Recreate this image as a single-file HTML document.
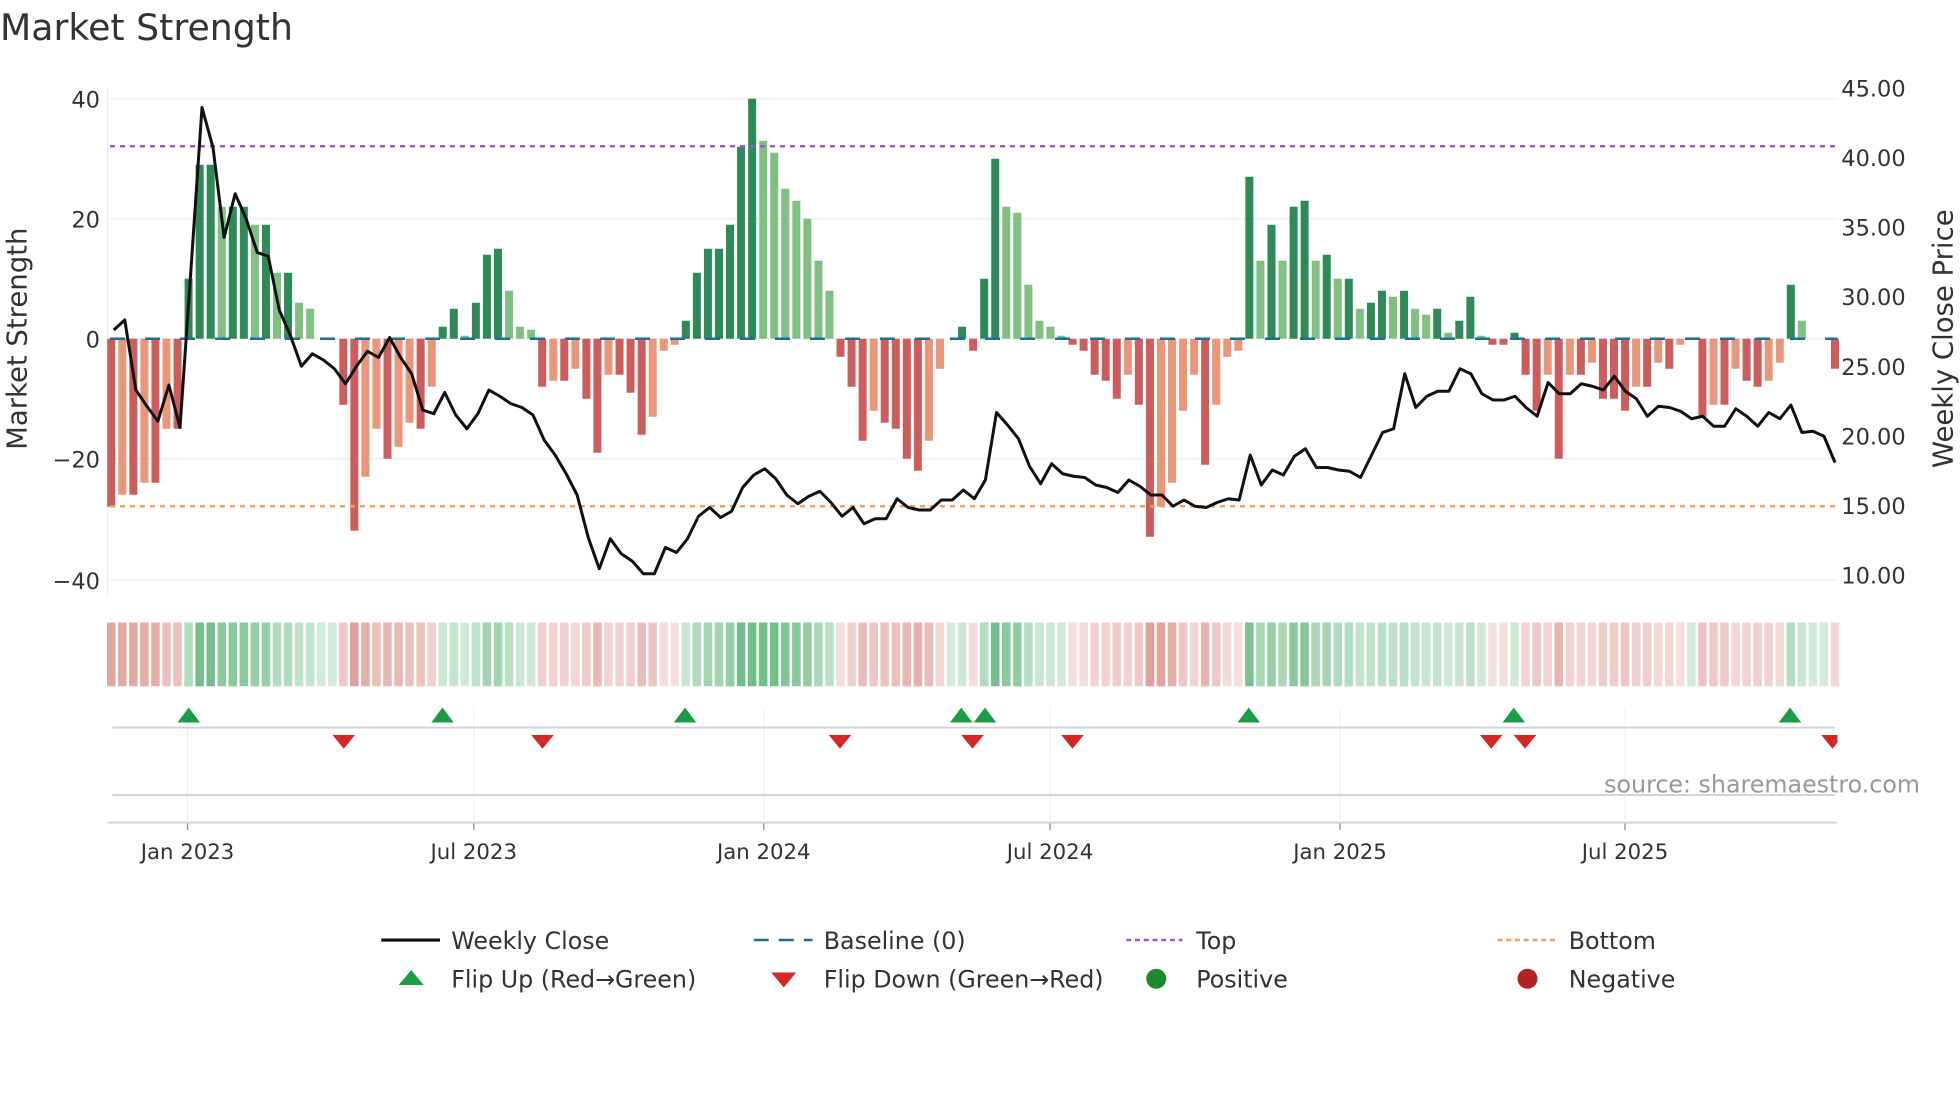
<!DOCTYPE html>
<html><head><meta charset="utf-8"><style>
html,body{margin:0;padding:0;background:#fff;overflow:hidden}
svg{display:block;font-family:"DejaVu Sans","Liberation Sans",sans-serif}
</style></head><body>
<svg id="s" width="1960" height="1102" viewBox="0 0 1568 881.6" xmlns="http://www.w3.org/2000/svg">
<text x="0" y="32" font-size="29" fill="#333">Market Strength</text>
<g id="g"></g>
</svg>
<script>
var NS="http://www.w3.org/2000/svg",g=document.getElementById('g');
function el(t,a,txt){var e=document.createElementNS(NS,t);for(var k in a)e.setAttribute(k,a[k]);if(txt!=null)e.textContent=txt;g.appendChild(e);return e;}
[79,175,271,367,464].forEach(function(y){el('line',{x1:86,x2:1470,y1:y,y2:y,stroke:'#eceff2','stroke-width':1});});
var lt=[['40',79],['20',175],['0',271],['\u221220',367],['\u221240',464]];
lt.forEach(function(a){el('text',{x:80,y:a[1]+7,'font-size':18,fill:'#333','text-anchor':'end'},a[0]);});
var rt=['45.00','40.00','35.00','30.00','25.00','20.00','15.00','10.00'];
rt.forEach(function(t,i){el('text',{x:1473,y:70+i*55.7+7,'font-size':18,fill:'#333'},t);});
el('text',{x:0,y:0,'font-size':22,fill:'#333','text-anchor':'middle',transform:'translate(21,271) rotate(-90)'},'Market Strength');
el('text',{x:0,y:0,'font-size':22,fill:'#333','text-anchor':'middle',transform:'translate(1562,271) rotate(-90)'},'Weekly Close Price');
el('line',{x1:86,x2:86,y1:70,y2:478,stroke:'#eceff2'});
var V=[-28,-26,-26,-24,-24,-15,-15,10,29,29,22,22,22,19,19,11,11,6,5,0,0,-11,-32,-23,-15,-20,-18,-14,-15,-8,2,5,0.5,6,14,15,8,2,1.5,-8,-7,-7,-5,-10,-19,-6,-6,-9,-16,-13,-2,-1,3,11,15,15,19,32,40,33,31,25,23,20,13,8,-3,-8,-17,-12,-14,-15,-20,-22,-17,-5,0,2,-2,10,30,22,21,9,3,2,0.5,-1,-2,-6,-7,-10,-6,-11,-33,-28,-24,-12,-6,-21,-11,-3,-2,27,13,19,13,22,23,13,14,10,10,5,6,8,7,8,5,4,5,1,3,7,0.5,-1,-1,1,-6,-12,-6,-20,-6,-6,-4,-10,-10,-12,-8,-8,-4,-5,-1,0,-13,-11,-11,-5,-7,-8,-7,-4,9,3,0,0,-5];
var n=V.length,dx=(1468-89)/(n-1);
for(var i=0;i<n;i++){var v=V[i],x=89+i*dx,p=i?V[i-1]:0,dark=Math.abs(v)>=Math.abs(p)&&Math.sign(v)==Math.sign(p)||Math.sign(v)!=Math.sign(p);
 var c=v>=0?(dark?'#2e8b57':'#80c080'):(dark?'#cd5c5c':'#e9967a');
 var h=Math.abs(v)*4.8;if(h<0.5)h=0;
 el('rect',{x:x-3.2,y:v>=0?271-h:271,width:6.4,height:h,fill:c});
 var a=0.25+0.55*Math.min(Math.abs(v),30)/30;
 el('rect',{x:x-3.4,y:498,width:6.8,height:51,fill:v>=0?'#2ea04f':'#c0392b','fill-opacity':a*(v>=0?0.85:0.6)});
}
el('line',{x1:88,x2:1470,y1:271,y2:271,stroke:'#1f6f8b','stroke-width':2,'stroke-dasharray':'12,16'});
el('line',{x1:88,x2:1470,y1:117,y2:117,stroke:'#9b59d0','stroke-width':2,'stroke-dasharray':'4,4'});
el('line',{x1:88,x2:1470,y1:405,y2:405,stroke:'#f0a060','stroke-width':2,'stroke-dasharray':'4,4'});
var P=[264,256,312,325,337,308,342,215,86,118,190,155,175,202,205,248,268,293,283,288,295,307,293,281,286,270,286,299,328,331,314,332,343,331,312,317,323,326,332,352,364,379,396,430,455,431,443,449,459,459,438,442,431,413,406,414,409,390,380,375,383,396,403,397,393,402,413,406,419,415,415,399,406,408,408,400,400,392,399,384,330,340,351,373,387,371,379,381,382,388,390,394,384,389,396,396,405,400,405,406,402,399,400,364,388,376,380,365,359,374,374,376,377,382,364,346,343,299,326,317,313,313,295,299,315,320,320,317,326,333,306,315,315,307,309,312,301,313,319,333,325,326,329,335,333,341,341,327,333,341,330,335,324,346,345,349,370];
var pd='';for(var i=0;i<P.length;i++){var x=91+i*(1468-91)/(P.length-1);pd+=(i?'L':'M')+x.toFixed(1)+','+P[i];}
el('path',{d:pd,fill:'none',stroke:'#111','stroke-width':2.4,'stroke-linejoin':'round'});
[150,379,611,840,1072,1300].forEach(function(x){el('line',{x1:x,x2:x,y1:565,y2:656,stroke:'#eef1f4'});el('line',{x1:x,x2:x,y1:658,y2:664,stroke:'#888'});});
el('line',{x1:90,x2:1468,y1:582,y2:582,stroke:'#cfd3d8','stroke-width':1.5});
el('line',{x1:90,x2:1468,y1:636,y2:636,stroke:'#cfd3d8','stroke-width':1.5});
el('line',{x1:86,x2:1470,y1:658,y2:658,stroke:'#cfd3d8','stroke-width':1.5});
[151,354,548,769,788,999,1211,1432].forEach(function(x){el('path',{d:'M'+(x-9)+',578L'+(x+9)+',578L'+x+',566Z',fill:'#1a9e45'});});
[275,434,672,778,858,1193,1220,1466].forEach(function(x){el('path',{d:'M'+(x-9)+',588L'+(x+9)+',588L'+x+',599Z',fill:'#d62728'});});
el('rect',{x:1470,y:585,width:20,height:20,fill:'#fff'});
el('text',{x:1536,y:634,'font-size':19,fill:'#999','text-anchor':'end'},'source: sharemaestro.com');
[['Jan 2023',150],['Jul 2023',379],['Jan 2024',611],['Jul 2024',840],['Jan 2025',1072],['Jul 2025',1300]].forEach(function(a){el('text',{x:a[1],y:687,'font-size':17,fill:'#333','text-anchor':'middle'},a[0]);});
el('line',{x1:305,x2:352,y1:752,y2:752,stroke:'#111','stroke-width':2.5});
el('text',{x:361,y:759,'font-size':19,fill:'#333'},'Weekly Close');
el('line',{x1:603,x2:650,y1:752,y2:752,stroke:'#1f6f8b','stroke-width':2,'stroke-dasharray':'12,8'});
el('text',{x:659,y:759,'font-size':19,fill:'#333'},'Baseline (0)');
el('line',{x1:901,x2:946,y1:752,y2:752,stroke:'#9b59d0','stroke-width':2,'stroke-dasharray':'4,3'});
el('text',{x:957,y:759,'font-size':19,fill:'#333'},'Top');
el('line',{x1:1198,x2:1244,y1:752,y2:752,stroke:'#f0a060','stroke-width':2,'stroke-dasharray':'4,3'});
el('text',{x:1255,y:759,'font-size':19,fill:'#333'},'Bottom');
el('path',{d:'M319,788L339,788L329,776Z',fill:'#1a9e45'});
el('text',{x:361,y:790,'font-size':19,fill:'#333'},'Flip Up (Red\u2192Green)');
el('path',{d:'M617,778L637,778L627,790Z',fill:'#d62728'});
el('text',{x:659,y:790,'font-size':19,fill:'#333'},'Flip Down (Green\u2192Red)');
el('circle',{cx:925,cy:783,r:8,fill:'#1e8c2e'});
el('text',{x:957,y:790,'font-size':19,fill:'#333'},'Positive');
el('circle',{cx:1222,cy:783,r:8,fill:'#b22222'});
el('text',{x:1255,y:790,'font-size':19,fill:'#333'},'Negative');
</script>
</body></html>
